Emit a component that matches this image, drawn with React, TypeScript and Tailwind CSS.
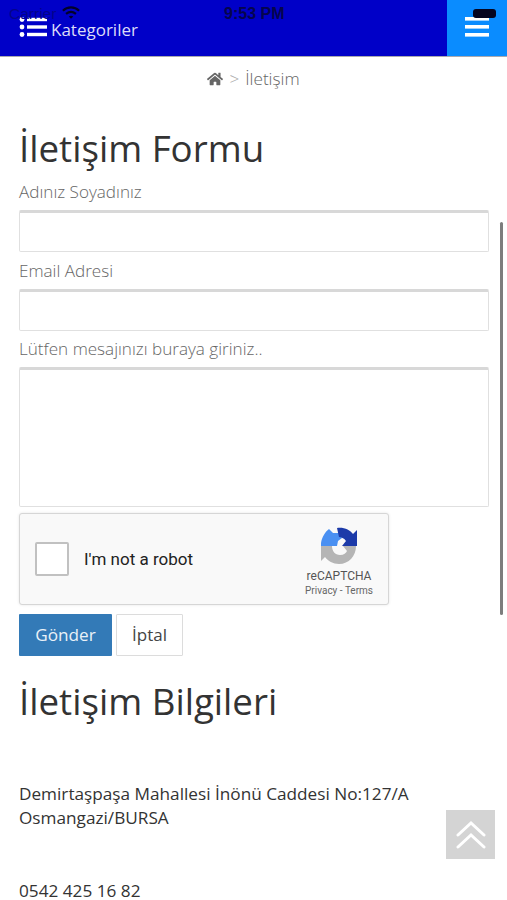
import { FaHome } from "react-icons/fa";

function Field({ label, tall }: { label: string; tall?: boolean }) {
  return (
    <div>
      <div className="h-[26px] text-[17.1px] font-light leading-[26px] text-[#666]">{label}</div>
      <div
        className={`mt-[5px] rounded-[2px] border border-[#e0e0e0] border-t-[3px] border-t-[#d8d8d8] bg-white ${
          tall ? "h-[140px]" : "h-[42px]"
        }`}
      />
    </div>
  );
}

function RecaptchaLogo() {
  return (
    <svg viewBox="0 0 38 38" className="h-[38px] w-[38px]">
      <path d="M1 19 L1 16 C2 10 5 5 9 2 L13 6 L19 6 L22 11 L18 14 L17 19 Z" fill="#4a90f2" />
      <path d="M17 1 C24 0 30 3 33 7 L37 3 L37 19 L22 19 L26 14 C24 11 21 10 19 10 Z" fill="#1c3aa9" />
      <path d="M1 19 L12 19 C12 24 15 28 20 28 C24 28 26 26 27 24 L23 19 L36 19 C36 29 29 37 19 37 C13 37 8 34 5 30 L1 34 Z" fill="#b5b5b5" />
    </svg>
  );
}

export default function App() {
  return (
    <div className="relative h-[900px] w-[507px] overflow-hidden bg-white font-['Open_Sans',sans-serif]">
      {/* Header */}
      <header className="flex h-[57px] items-stretch border-b border-[#a9a9b0] bg-[#0000c8]">
        <div className="flex flex-1 items-center gap-[4px] pl-[19px]">
          <svg viewBox="0 0 28 20" className="mb-[3px] h-[20px] w-[28px]" fill="#fff">
            <circle cx="3" cy="2.5" r="2.4" />
            <circle cx="3" cy="10" r="2.4" />
            <circle cx="3" cy="17.5" r="2.4" />
            <rect x="8" y="0.8" width="20" height="3.4" />
            <rect x="8" y="8.3" width="20" height="3.4" />
            <rect x="8" y="15.8" width="20" height="3.4" />
          </svg>
          <span className="mt-[4px] text-[17px] text-[#dcdcf8]">Kategoriler</span>
        </div>
        <div className="flex w-[60px] items-center justify-center bg-[#0a8cff] pb-[2px]">
          <svg viewBox="0 0 24 20" className="h-[20px] w-[24px]" fill="#fff">
            <rect y="0" width="24" height="3.6" />
            <rect y="8" width="24" height="3.6" />
            <rect y="16" width="24" height="3.6" />
          </svg>
        </div>
      </header>

      {/* Status bar */}
      <div className="absolute left-[9px] top-[5px] font-['Liberation_Sans',sans-serif] text-[15.5px] leading-[18px] text-[#04048a]">
        Carrier
      </div>
      <svg viewBox="0 0 20 15" className="absolute left-[62px] top-[6px] h-[14px] w-[18px]" fill="none" stroke="#02022a" strokeWidth="2.4">
        <path d="M1 5 C6 0 14 0 19 5" />
        <path d="M4.5 8.5 C8 5.5 12 5.5 15.5 8.5" />
        <path d="M7.5 11.5 L10 14 L12.5 11.5 C11 10.3 9 10.3 7.5 11.5 Z" fill="#02022a" stroke="none" />
      </svg>
      <div className="absolute left-[224px] top-[5px] font-['Liberation_Sans',sans-serif] text-[16px] font-bold leading-[18px] text-[#05054d]">
        9:53 PM
      </div>
      <div className="absolute left-[473px] top-[9px] h-[9px] w-[23px] rounded-[3px] bg-[#050520]" />

      {/* Breadcrumb */}
      <div className="flex h-[45px] items-center justify-center pb-[2px] text-[17.2px] font-light text-[#666]">
        <FaHome className="h-[16px] w-[16px] text-[#666]" />
        <span className="mx-[6px] text-[#aaa]">&gt;</span>
        <span>İletişim</span>
      </div>

      <main className="px-[19px]">
        <h1 className="mt-[20px] h-[52px] text-[36.7px] font-normal leading-[52px] text-[#333]">İletişim Formu</h1>
        <div className="mt-[5px] flex w-[470px] flex-col gap-[5.5px]">
          <Field label="Adınız Soyadınız" />
          <Field label="Email Adresi" />
          <Field label="Lütfen mesajınızı buraya giriniz.." tall />
        </div>

        {/* reCAPTCHA */}
        <div className="mt-[6px] flex h-[92px] w-[370px] items-center rounded-[3px] border border-[#d6d6d6] bg-[#f9f9f9] pl-[15px] pr-[15px] font-['Roboto',sans-serif] shadow-[0_0_3px_rgba(0,0,0,0.1)]">
          <div className="h-[34px] w-[34px] rounded-[2px] border-2 border-[#c1c1c1] bg-white" />
          <span className="ml-[15px] mt-[2px] flex-1 text-[17px] text-[#222]">I'm not a robot</span>
          <div className="flex flex-col items-center pt-[7px]">
            <RecaptchaLogo />
            <span className="mt-[3px] text-[12px] leading-[16px] text-[#555]">reCAPTCHA</span>
            <span className="text-[10px] leading-[14px] text-[#666]">Privacy - Terms</span>
          </div>
        </div>

        <div className="mt-[9px] flex gap-[4px]">
          <button className="h-[42px] w-[93px] rounded-[1px] bg-[#337ab7] text-[17.2px] text-[#e9f1f8]">Gönder</button>
          <button className="h-[42px] w-[67px] rounded-[1px] border border-[#dcdcdc] bg-white text-[17px] text-[#444]">İptal</button>
        </div>

        <h2 className="mt-[19px] h-[52px] text-[36.7px] font-normal leading-[52px] text-[#333]">İletişim Bilgileri</h2>
        <p className="mt-[55px] text-[17.2px] leading-[24px] text-[#333]">
          Demirtaşpaşa Mahallesi İnönü Caddesi No:127/A
          <br />
          Osmangazi/BURSA
        </p>
        <p className="mt-[52px] text-[17.2px] leading-[18px] text-[#333]">0542 425 16 82</p>
      </main>

      {/* Scrollbar */}
      <div className="absolute left-[500px] top-[222px] h-[393px] w-[3px] rounded-full bg-[#7d7d7d]" />

      {/* Back to top */}
      <div className="absolute left-[446px] top-[810px] flex h-[49px] w-[49px] items-center justify-center bg-[#d4d4d4]">
        <svg viewBox="0 0 30 30" className="h-[30px] w-[30px]" fill="none" stroke="#fff" strokeWidth="3" strokeLinecap="round">
          <path d="M2 15 L15 3 L28 15" />
          <path d="M2 27 L15 15 L28 27" />
        </svg>
      </div>
    </div>
  );
}
